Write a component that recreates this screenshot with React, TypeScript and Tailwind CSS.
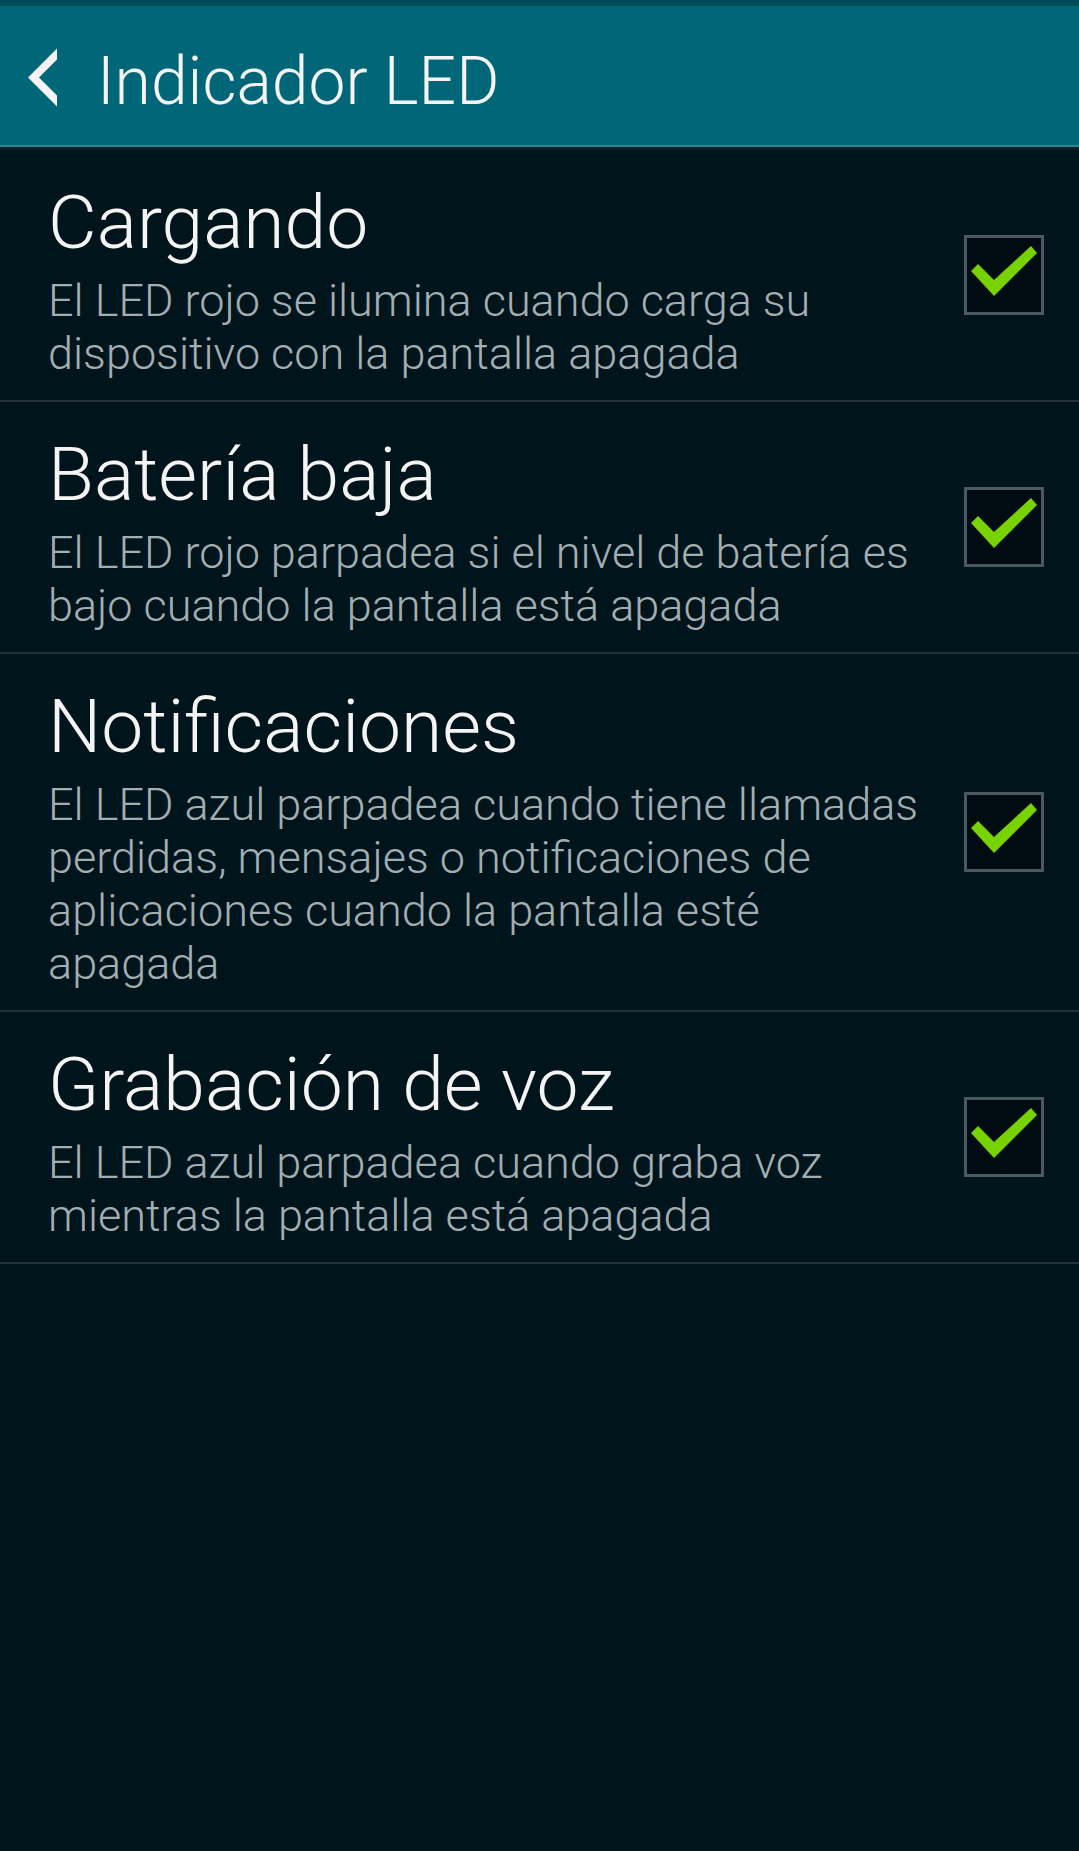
import React from 'react';

type Option = {
    id: number;
    title: string;
    description: string;
    checked: boolean;
};

const options: Option[] = [
    {
        id: 1,
        title: 'Cargando',
        description: 'El LED rojo se ilumina cuando carga su dispositivo con la pantalla apagada',
        checked: true,
    },
    {
        id: 2,
        title: 'Batería baja',
        description: 'El LED rojo parpadea si el nivel de batería es bajo cuando la pantalla está apagada',
        checked: true,
    },
    {
        id: 3,
        title: 'Notificaciones',
        description:
            'El LED azul parpadea cuando tiene llamadas perdidas, mensajes o notificaciones de aplicaciones cuando la pantalla esté apagada',
        checked: true,
    },
    {
        id: 4,
        title: 'Grabación de voz',
        description: 'El LED azul parpadea cuando graba voz mientras la pantalla está apagada',
        checked: true,
    },
];

const CheckBox: React.FC<{ checked: boolean }> = ({ checked }) => (
    <div className="w-[80px] h-[80px] shrink-0 border-[3px] border-[#4b5a60] bg-[#000c12] relative">
        {checked && (
            <svg width="80" height="80" viewBox="0 0 80 80" className="absolute -left-[3px] -top-[3px]">
                <polygon points="14,29 30,45 67,11 73,18 30,61 7,36" fill="#77d200" />
            </svg>
        )}
    </div>
);

const App: React.FC = () => {
    return (
        <div className="min-h-[1851px] w-full bg-[#00141c] font-['Roboto',sans-serif] font-light">
            <div className="h-[6px] bg-[#004a5a]" />
            <div className="h-[139px] bg-[#026679] flex items-start">
                <svg width="40" height="64" viewBox="0 0 40 64" className="ml-[24px] mt-[40px] shrink-0">
                    <polygon points="33,2.5 33,13.5 15,31.5 33,49.5 33,60.5 4,31.5" fill="#f4f4f4" />
                </svg>
                <h1 className="ml-[33px] mt-[43px] text-[66px] leading-none text-[#f4f4f4]">Indicador LED</h1>
            </div>
            <div className="h-[2px] bg-[#2d8090]" />
            <div className="h-[3px] bg-[#0a2128]" />
            <div>
                {options.map((option: Option) => (
                    <div
                        key={option.id}
                        className="flex items-center border-b-2 border-[#243238] pl-[48px] pr-[35px]"
                    >
                        <div className="flex-1 pt-[20px] pb-[20px] pr-[34px]">
                            <h2 className="text-[75px] leading-[104px] text-[#f4f4f4]">{option.title}</h2>
                            <p className="text-[45px] leading-[53px] text-[#a3aeb2]">{option.description}</p>
                        </div>
                        <CheckBox checked={option.checked} />
                    </div>
                ))}
            </div>
        </div>
    );
};

export default App;
